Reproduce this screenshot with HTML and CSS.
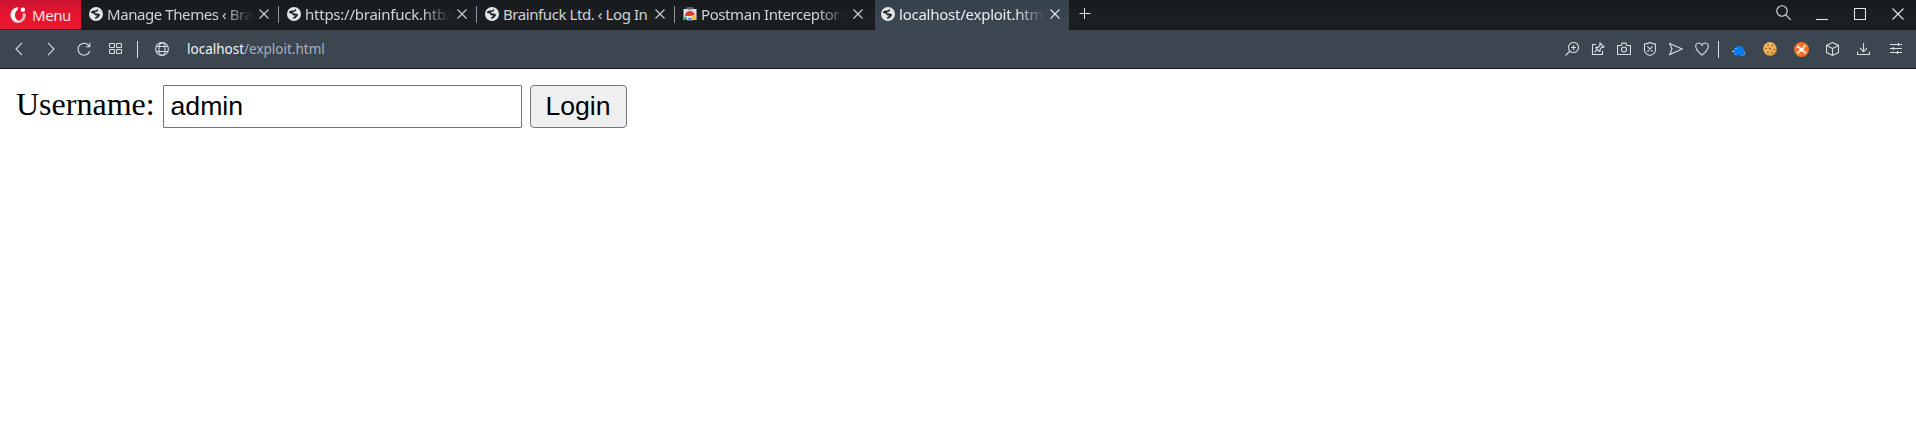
FILE: index.html
```
<!DOCTYPE html>
<html lang="en">
<head>
<meta charset="utf-8">
<title>localhost/exploit.html</title>
<link rel="stylesheet" href="styles.css">
</head>
<body>
<svg class="defs" aria-hidden="true">
  <symbol id="globe" viewBox="0 0 14 14"><circle cx="7" cy="7" r="7" fill="#e3e6e9"/><path d="M1.800 6Q2 3.500 4.500 3.400L7 3.600 8.600 2 9.300 3.600 7.600 4.800 5.600 5.400 6.800 6.600H9.400L11.200 7.800 10.400 9.200 8.400 11.200 5.800 11.800 6.200 10.200 8.600 8.700 6 8.200 4.600 6.600z" fill="#1f2427"/></symbol>
  <symbol id="close" viewBox="0 0 10 10"><path d="M.5.5l9 9M9.5.5l-9 9" fill="none" stroke="currentColor" stroke-width="1.1"/></symbol>
</svg>
<header class="tabbar">
  <div class="menu">
    <svg class="menu-logo" viewBox="0 0 17 16"><defs><linearGradient id="lg" x1="0" x2="1" y1=".2" y2=".8"><stop offset="0" stop-color="#fff"/><stop offset=".5" stop-color="#fbeef0"/><stop offset="1" stop-color="#c9a3a8"/></linearGradient></defs><path d="M8.800.2A7.700 7.900 0 1 0 15.700 6.500L12.600 6.300A3.900 5.300 0 1 1 7.600 3.100Q7.400 1.300 8.800.2Z" fill="url(#lg)"/><circle cx="12.900" cy="2.700" r="2.200" fill="#fff"/></svg>
    <span>Menu</span>
  </div>
  <div class="tab"><svg class="fav"><use href="#globe"/></svg><span class="title">Manage Themes ‹ Bra</span><svg class="close"><use href="#close"/></svg></div>
  <div class="tab"><svg class="fav"><use href="#globe"/></svg><span class="title url">https://brainfuck.htb/</span><svg class="close"><use href="#close"/></svg></div>
  <div class="tab"><svg class="fav"><use href="#globe"/></svg><span class="title whole">Brainfuck Ltd. ‹ Log In</span><svg class="close"><use href="#close"/></svg></div>
  <div class="tab last"><svg class="fav" viewBox="0 0 14 14"><path d="M4.500 3V1h5v2" fill="none" stroke="#777b7e" stroke-width="1.600"/><path d="M.5 2h13v11H.5z" fill="#e1e4e6"/><path d="M4.500 2h5v1h-5z" fill="#999"/><path d="M2 9a5 5 0 0 1 10 0z" fill="#e53a31"/><path d="M2 9l3 4H1.200Q1 10.500 2 9z" fill="#21a35a"/><path d="M9 8h3.200q1.200 2.500.6 5H8z" fill="#fbc51d"/><path d="M4.200 13a2.800 2.800 0 0 1 5.600 0z" fill="#3d80df" stroke="#fff" stroke-width=".6"/></svg><span class="title">Postman Interceptor -</span><svg class="close"><use href="#close"/></svg></div>
  <div class="tab active"><svg class="fav"><use href="#globe"/></svg><span class="title url">localhost/exploit.htm</span><svg class="close"><use href="#close"/></svg></div>
  <svg class="plus" viewBox="0 0 12 12"><path d="M.5 5.500h11M5.500 0v11" fill="none" stroke="#dfe3e6"/></svg>
  <div class="window-controls">
    <svg width="16" height="16" viewBox="0 0 16 16"><circle cx="6" cy="6" r="5.200"/><path d="M9.800 9.800l5 5"/></svg>
    <svg width="12" height="16" viewBox="0 0 12 16"><path d="M0 14.500h12"/></svg>
    <svg width="12" height="16" viewBox="0 0 12 16"><path d="M.5 3.500h11v11H.5z"/></svg>
    <svg width="12" height="16" viewBox="0 0 12 16"><path d="M.5 3.500l11 11M11.500 3.500l-11 11"/></svg>
  </div>
</header>
<nav class="toolbar">
  <svg class="back" width="8" height="14" viewBox="0 0 8 14"><path d="M7 .8L1 7l6 6.200"/></svg>
  <svg class="forward" width="8" height="14" viewBox="0 0 8 14"><path d="M1 .8L7 7l-6 6.200"/></svg>
  <svg class="reload" width="14" height="14" viewBox="0 0 14 14"><path d="M12.300 4.300A6 6 0 1 0 12.800 9M12.800.7v4H8.800"/></svg>
  <svg class="dial" width="14" height="12" viewBox="0 0 14 12"><rect x=".5" y=".5" width="5" height="4" rx=".7"/><rect x="7.500" y=".5" width="5" height="4" rx=".7"/><rect x=".5" y="6.500" width="5" height="4" rx=".7"/><rect x="7.500" y="6.500" width="5" height="4" rx=".7"/></svg>
  <i class="rule"></i>
  <svg class="site" width="14" height="14" viewBox="0 0 14 14"><circle cx="7" cy="7" r="6.400"/><ellipse cx="7" cy="7" rx="3.100" ry="6.400"/><path d="M1.200 4.500h11.600M1.200 9.500h11.600"/></svg>
  <span class="address">localhost<span class="path">/exploit.html</span></span>
  <div class="actions">
    <svg width="14" height="14" viewBox="0 0 14 14"><circle cx="8.500" cy="5.500" r="5"/><path d="M5 9L.5 13.500M8.500 3v5M6 5.500h5"/></svg>
    <svg width="14" height="14" viewBox="0 0 14 14"><path d="M5 2.500H1.500v10h10V9M3.700 10.200l3-3M9 .8l4 4-1.200.6-.8-.2-2 2 .2 1.800-.8.6-3.600-3.600.6-.8 1.800.2 2-2-.4-1z"/></svg>
    <svg width="14" height="14" viewBox="0 0 14 14"><path d="M.5 3.500H4l1.200-2.400h3.600L10 3.500h3.500v9H.5z"/><circle cx="7" cy="7.500" r="2.500"/></svg>
    <svg width="14" height="14" viewBox="0 0 14 14"><path d="M7 .5Q9.500 2 12.500 2v6.500Q12 11.800 7 13.500 2 11.800 1.500 8.500V2Q4.500 2 7 .5zM4.400 4.400l5.200 5.200M9.600 4.400L4.400 9.600"/></svg>
    <svg width="14" height="14" viewBox="0 0 14 14"><path d="M.7 1.500L13.200 7 .7 12.500 3 7z"/></svg>
    <svg width="14" height="14" viewBox="0 0 14 14"><path d="M7 3.200C5.800.4 2.400.3 1.100 2.500-.4 5.300 1 8 7 13.200 13 8 14.400 5.300 12.900 2.500 11.600.3 8.200.4 7 3.200z"/></svg>
  </div>
  <i class="rule ext-rule"></i>
  <div class="extensions">
    <svg width="14" height="14" viewBox="0 0 14 14"><path d="M1.500 10C1.500 6 4 4 7.200 4c3.600 0 5.300 2.800 5.200 6l.8 2-1 2.500H9.800L8.300 13.500H4z" fill="#087cf4" stroke="none"/><path d="M0 9.500l2.200-1.200-.6 2.200zM3.200 6.500l1.400-.8-.4 1.800zM9 14l2-.6-.6.600zM12.200 9.500l1 2-1.300-.6zM2 12.500l1.400-.6v1.200z" fill="#d8ecff" stroke="none"/></svg>
    <svg width="14" height="14" viewBox="0 0 14 14"><circle cx="7" cy="7" r="6.900" fill="#d8913b" stroke="none"/><circle cx="6.600" cy="6.300" r="6" fill="#f0b55c" stroke="none"/><g fill="#7a4824" stroke="none"><circle cx="5" cy="3" r=".7"/><circle cx="9.500" cy="3.500" r=".8"/><circle cx="3" cy="6.500" r=".8"/><circle cx="7" cy="6.500" r=".9"/><circle cx="11" cy="7.500" r=".7"/><circle cx="5" cy="10" r=".8"/><circle cx="9" cy="10.500" r=".8"/></g></svg>
    <svg width="15" height="15" viewBox="0 0 15 15"><circle cx="7.500" cy="7.500" r="7.500" fill="#f37326" stroke="none"/><path d="M3 4.200l2 .8M11 3.200l-.6 1.600M4 11.600l.6-1.800M12 11l-1.800-1" stroke="#fff" stroke-width="2"/><path d="M4.800 5l2.700 1.300L10.200 5 9.200 7.500l1 2.600-2.700-1-2.700 1 1-2.600z" fill="#fff" stroke="#fff" stroke-width=".5"/></svg>
    <svg width="14" height="14" viewBox="0 0 14 14"><path d="M6.500.6l6 2.800v7.200l-6 2.800-6-2.800V3.400zM.5 3.600l6 2.900 6-2.900M6.500 6.500v6.900"/></svg>
    <svg width="14" height="14" viewBox="0 0 14 14"><path d="M6.500 1v8.500M3 6.200l3.500 3.500L10 6.200M.5 9.500v3h12v-3"/></svg>
    <svg class="sliders" width="12" height="14" viewBox="0 0 12 14"><path d="M0 2.500h12M0 6.500h12M0 10.500h12M8.500 1v3M3.500 5v3M7.500 9v3"/></svg>
  </div>
</nav>
<main class="page">
  <form class="login"><label for="user">Username:</label><input id="user" type="text" value="admin"><button type="button">Login</button></form>
</main>
</body>
</html>
```
FILE: styles.css
```
* { box-sizing: border-box; }
body { margin: 0; background: #fff; height: 430px; overflow: hidden; }
svg { display: block; flex: none; }
.defs { display: none; }

.tabbar {
  display: flex;
  height: 30px;
  background: linear-gradient(#15191b, #1c2023 50%, #191c1f);
  font-family: "Noto Sans", sans-serif;
  font-size: 15px;
  line-height: 20px;
  letter-spacing: -0.42px;
  color: #d0d2d3;
}
.menu {
  display: flex;
  align-items: center;
  gap: 5px;
  width: 81px;
  height: 29px;
  padding-left: 10px;
  background: linear-gradient(#ca1430, #e5152f 45%, #ea1730);
  color: #f5e4e7;
}
.menu-logo { width: 17px; height: 16px; }
.tab {
  display: flex;
  align-items: center;
  width: 198px;
  padding: 0 10px 2px 8px;
  background: linear-gradient(#8497a9, #8497a9) right 0 top 6px / 1px 17px no-repeat;
}
.tab.last { width: 200px; padding-right: 12px; background: none; }
.tab.active {
  width: 194px;
  padding: 0 9px 2px 6px;
  background: linear-gradient(#34404a, #3b4650 70%);
  color: #e8ebee;
}
.fav { width: 14px; height: 14px; margin-right: 4px; }
.title {
  width: 146px;
  flex: none;
  white-space: nowrap;
  -webkit-mask-image: linear-gradient(90deg, #000 80%, transparent);
  mask-image: linear-gradient(90deg, #000 80%, transparent);
}
.title.url { letter-spacing: -0.24px; }
.title.whole { -webkit-mask-image: none; mask-image: none; }
.close { width: 10px; height: 10px; margin-left: auto; }
.plus { width: 12px; height: 12px; margin: 8px 0 0 10px; }
.window-controls {
  display: flex;
  margin: 5px 12px 0 auto;
  gap: 26px;
  fill: none;
  stroke: #e2e5e7;
  stroke-width: 1.1;
}
.window-controls svg:first-child { margin-right: -2px; }

.toolbar {
  display: flex;
  align-items: center;
  height: 39px;
  padding: 0 14px 0 15px;
  background: #3b4650;
  border-bottom: 1px solid #15171a;
  fill: none;
  stroke: #d9dde0;
  stroke-width: 1.1;
}
.forward { margin-left: 24px; }
.reload { margin-left: 22px; }
.dial { margin-left: 18px; }
.rule { width: 1px; height: 17px; margin-left: 14px; background: #dce0e3; }
.site { margin-left: 17px; }
.address {
  margin-left: 18px;
  font: 13.5px/20px "Noto Sans", sans-serif;
  color: #f0f2f4;
}
.path { color: #a5b2be; }
.actions { display: flex; gap: 12px; margin-left: auto; }
.ext-rule { margin-left: 9px; }
.extensions { display: flex; align-items: center; gap: 17px; margin-left: 13px; }
.sliders { margin-left: 2px; }

.page { padding: 16px; }
.login {
  display: flex;
  font-family: "Liberation Serif", serif;
  font-size: 32px;
  line-height: 37px;
  color: #000;
}
.login label { width: 147px; padding-top: 1px; }
.login input, .login button {
  height: 43px;
  margin: 0;
  border: 1px solid #767676;
  font: 26.667px/31px "Liberation Sans", sans-serif;
  color: #000;
}
.login input { width: 359px; padding: 0 6.5px; border-radius: 1px; background: #fff; outline: none; }
.login button { width: 97px; margin-left: 8px; padding: 0 1px 0 0; border-radius: 4px; background: #efefef; }
```
